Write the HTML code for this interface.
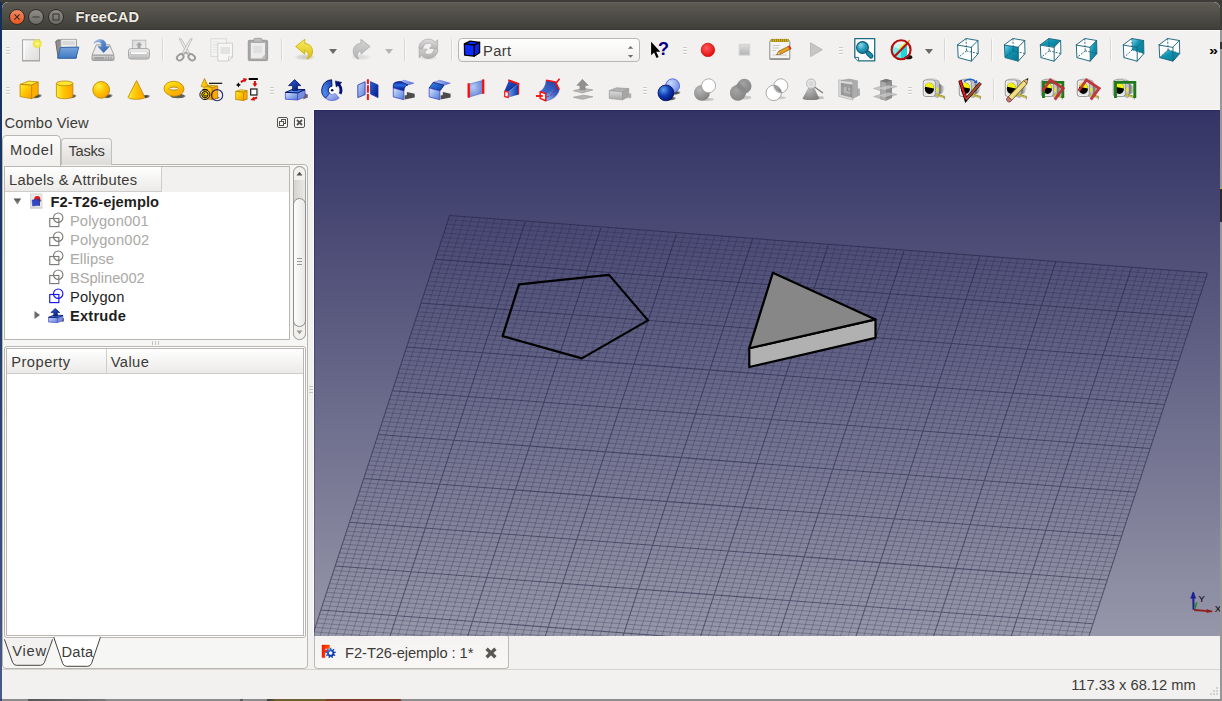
<!DOCTYPE html><html lang="en"><head><meta charset="utf-8"><title>FreeCAD</title><style>
*{box-sizing:border-box;margin:0;padding:0}
html,body{width:1222px;height:701px;overflow:hidden;background:#3b3a36}
body{position:relative;font-family:"Liberation Sans",sans-serif;font-size:14.7px;color:#3c3b37}
.abs{position:absolute}
#desk-l{left:0;top:2px;width:2px;height:699px;background:linear-gradient(#14305a,#1b3a68 40%,#4a5a86 100%)}
#desk-t{left:0;top:0;width:1222px;height:2px;background:#3d3c38}
#desk-r{left:1220px;top:0;width:2px;height:701px;background:linear-gradient(#3d3c38 0,#3d3c38 30px,#979797 30px,#979797 42px,#333 42px,#333 49px,#979797 49px,#979797 188px,#c8bc00 188px,#c8bc00 189px,#2b2b2b 189px,#2b2b2b 222px,#979797 222px,#979797 100%)}
#desk-b{left:0;top:699px;width:1222px;height:2px;background:linear-gradient(90deg,#3a4a78 0,#3a4a78 2px,#8c8c8c 2px,#8c8c8c 28px,#555 28px,#777 105px,#8c8c8c 106px,#8c8c8c 240px,#5a5a5a 240px,#5a5a5a 243px,#8c8c8c 243px,#8c8c8c 267px,#444 267px,#444 270px,#6e6030 276px,#6e6030 325px,#7c3c2a 327px,#7c3c2a 400px,#8e8e8e 402px,#8e8e8e 100%)}
#win{left:2px;top:2px;width:1218px;height:697px;background:#f2f1f0;border-radius:6px 6px 0 0;overflow:hidden}
#title{left:0;top:0;width:1218px;height:28px;background:linear-gradient(#5c5a52,#403f3a 96%,#34332f);border-radius:6px 6px 0 0;border-top:1px solid #64625a}
#title .t{left:73px;top:5px;font-weight:bold;color:#dfdbd2;font-size:14.7px;letter-spacing:.1px}
.wb{position:absolute;top:5.600px;width:16px;height:16px;border-radius:50%;border:1px solid #2e2d2a}
#tl{left:0;top:28px;width:1218px;height:1px;background:#fbfbfa}
.tx{white-space:nowrap;position:absolute}
.ic{position:absolute;width:24px;height:24px}
.ic svg{display:block;width:24px;height:24px;overflow:visible}
.grip{position:absolute;width:4px;height:8px;background:linear-gradient(#cdcbc7 0px,#cdcbc7 1px,#fbfbfa 1px,#fbfbfa 2px,transparent 2px,transparent 3px,#cdcbc7 3px,#cdcbc7 4px,#fbfbfa 4px,#fbfbfa 5px,transparent 5px,transparent 6px,#cdcbc7 6px,#cdcbc7 7px,#fbfbfa 7px,#fbfbfa 8px)}
.sep{position:absolute;width:1px;height:24px;background:linear-gradient(#e6e5e2,#d8d6d3 15%,#d8d6d3 85%,#e6e5e2);box-shadow:1px 0 0 #f9f9f8}
.arr{position:absolute;width:0;height:0;border-left:4px solid transparent;border-right:4px solid transparent;border-top:5px solid #6b6a66}

.hdr{position:absolute;background:linear-gradient(#ffffff,#ebeae8);border-right:1px solid #cfcdc9;border-bottom:1px solid #cfcdc9}
.row{position:absolute;left:0;height:19px;white-space:nowrap}
.g{color:#a5a4a2}
</style></head><body>
<div id="desk-t" class="abs"></div><div id="desk-l" class="abs"></div><div id="desk-r" class="abs"></div><div id="desk-b" class="abs"></div>
<div id="win" class="abs">
<div id="title" class="abs">
<div class="wb" style="left:7.400px;background:linear-gradient(#f28a63,#e8561f)"><svg width="14" height="14" viewBox="0 0 14 14" style="display:block"><path d="M4.4 4.4L9.6 9.6M9.6 4.4L4.4 9.6" stroke="#3a2a22" stroke-width="1.1"/></svg></div>
<div class="wb" style="left:26.400px;background:linear-gradient(#8e8c85,#6d6b65)"><svg width="14" height="14" viewBox="0 0 14 14" style="display:block"><path d="M3.5 7H10.5" stroke="#3a3935" stroke-width="1.1"/></svg></div>
<div class="wb" style="left:45.500px;background:linear-gradient(#8e8c85,#6d6b65)"><svg width="14" height="14" viewBox="0 0 14 14" style="display:block"><rect x="4" y="4" width="6" height="6" fill="none" stroke="#3a3935" stroke-width="1.1"/></svg></div>
</div><div id="tl" class="abs"></div>
<div class="grip" style="left:4px;top:45px"></div><div class="grip" style="left:4px;top:85px"></div>
<div class="sep" style="left:160px;top:36px"></div>
<div class="sep" style="left:279px;top:36px"></div>
<div class="arr" style="left:327px;top:47.0px;border-top-color:#6b6a66"></div>
<div class="arr" style="left:383px;top:47.0px;border-top-color:#b5b3af"></div>
<div class="sep" style="left:402px;top:36px"></div>
<div class="sep" style="left:449px;top:36px"></div>
<div class="grip" style="left:681px;top:45px"></div>
<div class="grip" style="left:837px;top:45px"></div>
<div class="arr" style="left:923px;top:47.0px;border-top-color:#6b6a66"></div>
<div class="sep" style="left:942px;top:36px"></div>
<div class="sep" style="left:989px;top:36px"></div>
<div class="sep" style="left:1108px;top:36px"></div>
<div class="grip" style="left:268px;top:85px"></div>
<div class="grip" style="left:641px;top:85px"></div>
<div class="grip" style="left:906px;top:85px"></div>
<div class="sep" style="left:991px;top:76px"></div>
<div class="abs" style="left:456px;top:36px;width:182px;height:24px;border:1px solid #b8b6b1;border-radius:4px;background:linear-gradient(#fff,#f1f0ee)">


</div>



<svg class="abs" style="left:275px;top:115px" width="11" height="11" viewBox="0 0 11 11"><rect x=".5" y=".5" width="10" height="10" rx="1.500" fill="#f7f6f5" stroke="#55534f"/><rect x="4.500" y="2.500" width="4" height="4" fill="none" stroke="#55534f"/><rect x="2.500" y="4.500" width="4" height="4" fill="#f7f6f5" stroke="#55534f"/></svg>
<svg class="abs" style="left:292px;top:115px" width="11" height="11" viewBox="0 0 11 11"><rect x=".5" y=".5" width="10" height="10" rx="1.500" fill="#f7f6f5" stroke="#55534f"/><path d="M3 3L8 8M8 3L3 8" stroke="#55534f" stroke-width="1.800"/></svg>
<!-- tab pane -->
<div class="abs" style="left:0px;top:162px;width:306px;height:505px;border:1px solid #bab7b2;border-radius:0 4px 4px 4px;background:#f6f6f5"></div>
<div class="abs" style="left:59px;top:136px;width:51px;height:27px;border:1px solid #c2c0bb;border-bottom:none;border-radius:4px 4px 0 0;background:linear-gradient(#f5f4f3,#dedcd9)"></div>
<div class="abs" style="left:0px;top:133px;width:59px;height:31px;border:1px solid #b9b7b2;border-bottom:none;border-radius:5px 5px 0 0;background:linear-gradient(#fcfcfb,#f2f1f0 70%)"></div>

<!-- tree -->
<div class="abs" style="left:2px;top:164px;width:286px;height:174px;border:1px solid #b9b7b2;background:#fff"></div>
<div class="abs" style="left:3px;top:165px;width:284px;height:25px;background:#f2f1f0"></div>
<div class="hdr" style="left:3px;top:165px;width:157px;height:25px"></div>

<svg class="abs" style="left:11px;top:195.500px" width="9" height="8" viewBox="0 0 9 8"><defs><linearGradient id="gx" x1="0" y1="0" x2="0" y2="1"><stop offset="0" stop-color="#4f4e4a"/><stop offset="1" stop-color="#9c9a96"/></linearGradient></defs><path d="M.7 .6H8.100L4.400 6.700Z" fill="url(#gx)"/></svg>
<svg class="abs" style="left:27px;top:191px" width="16" height="17" viewBox="0 0 16 17"><rect x="1.500" y=".9" width="11.400" height="13.800" fill="#e9e9e9" stroke="#d0d0d0" stroke-width=".8"/><path d="M1 15.200H13.500" stroke="#c4c4c4" stroke-width=".8"/><path d="M5.200 6.200A3.100 3.100 0 0 1 11.400 6.200V8.500H5.200Z" fill="#e01818"/><path d="M3 7L9.500 6.300L10.100 12.300L3.600 13Z" fill="#3048c8" stroke="#2038b0" stroke-width=".5"/><path d="M9.500 6.300L10.100 12.300L11 11.500L10.500 5.800Z" fill="#1c2c90"/><path d="M10.800 7.800H12.300M9.800 12.500H11" stroke="#222" stroke-width=".7"/></svg>
<div class="abs" style="left:47px;top:210px;width:16px;height:16px"><svg class="abs" width="16" height="16" viewBox="0 0 16 16"><rect x=".75" y="6.500" width="9.100" height="8.100" fill="#fff" stroke="#7c7b79" stroke-width="1.150"/><circle cx="9.200" cy="5.700" r="4.700" fill="none" stroke="#7c7b79" stroke-width="1.150"/></svg></div>
<div class="abs" style="left:47px;top:229px;width:16px;height:16px"><svg class="abs" width="16" height="16" viewBox="0 0 16 16"><rect x=".75" y="6.500" width="9.100" height="8.100" fill="#fff" stroke="#7c7b79" stroke-width="1.150"/><circle cx="9.200" cy="5.700" r="4.700" fill="none" stroke="#7c7b79" stroke-width="1.150"/></svg></div>
<div class="abs" style="left:47px;top:248px;width:16px;height:16px"><svg class="abs" width="16" height="16" viewBox="0 0 16 16"><rect x=".75" y="6.500" width="9.100" height="8.100" fill="#fff" stroke="#7c7b79" stroke-width="1.150"/><circle cx="9.200" cy="5.700" r="4.700" fill="none" stroke="#7c7b79" stroke-width="1.150"/></svg></div>
<div class="abs" style="left:47px;top:267px;width:16px;height:16px"><svg class="abs" width="16" height="16" viewBox="0 0 16 16"><rect x=".75" y="6.500" width="9.100" height="8.100" fill="#fff" stroke="#7c7b79" stroke-width="1.150"/><circle cx="9.200" cy="5.700" r="4.700" fill="none" stroke="#7c7b79" stroke-width="1.150"/></svg></div>
<div class="abs" style="left:47px;top:286px;width:16px;height:16px"><svg class="abs" width="16" height="16" viewBox="0 0 16 16"><rect x=".75" y="6.500" width="9.100" height="8.100" fill="#fff" stroke="#1414f0" stroke-width="1.150"/><circle cx="9.200" cy="5.700" r="4.700" fill="none" stroke="#1414f0" stroke-width="1.150"/></svg></div>
<svg class="abs" style="left:31px;top:308px" width="8" height="10" viewBox="0 0 8 10"><path d="M1.500 1L7 5L1.500 9Z" fill="#6b6a66"/></svg>
<svg class="abs" style="left:46.400px;top:305.500px" width="15.800" height="15.200" viewBox="284.700 79 21.600 21.800" preserveAspectRatio="none"><defs><linearGradient id="tBl" x1="0" y1="0" x2="1" y2="1"><stop offset="0" stop-color="#c0d0f8"/><stop offset="1" stop-color="#6080d8"/></linearGradient><linearGradient id="tBd" x1="0" y1="0" x2="1" y2="1"><stop offset="0" stop-color="#3060d0"/><stop offset="1" stop-color="#001880"/></linearGradient></defs><path d="M305 93.500L307.800 94.500V97.500L303 99.500Z" fill="#444" opacity=".8"/><path d="M285.400 92.400L297.600 92.800V100L285.400 99.200Z" fill="url(#tBl)" stroke="#4848cc" stroke-width=".9" stroke-linejoin="round"/><path d="M297.600 92.800L305 89.600V96.800L297.600 100Z" fill="#7890dc" stroke="#4848cc" stroke-width=".9" stroke-linejoin="round"/><path d="M285.400 92.400L292.800 89.200L305 89.600L297.600 92.800Z" fill="#3a78e0" stroke="#000c58" stroke-width="1" stroke-linejoin="round"/><path d="M294.600 79.600L300.800 85.600H297.400V90.600H292.700V85.600H288.600Z" fill="url(#tBd)" stroke="#000c58" stroke-width=".9" stroke-linejoin="round"/></svg>

<!-- scrollbar -->
<div class="abs" style="left:291px;top:164px;width:13px;height:174px;border:1px solid #a7a5a0;border-radius:6.500px;background:linear-gradient(90deg,#d6d4d0,#e9e8e5)"></div>
<div class="abs" style="left:291px;top:164px;width:13px;height:14px;border-radius:6.500px 6.500px 0 0;background:#f2f1f0;border:1px solid #a7a5a0;border-bottom:none"></div>
<div class="abs" style="left:291px;top:324px;width:13px;height:14px;border-radius:0 0 6.500px 6.500px;background:#f2f1f0;border:1px solid #a7a5a0;border-top:none"></div>
<div class="abs" style="left:291px;top:196px;width:13px;height:129px;border:1px solid #8f8d88;border-radius:6.500px;background:linear-gradient(90deg,#fdfdfd,#e9e8e6)"></div>
<svg class="abs" style="left:294px;top:169px" width="7" height="5" viewBox="0 0 7 5"><path d="M.5 4.500L3.500 .8L6.500 4.500Z" fill="#55534f"/></svg>
<svg class="abs" style="left:294px;top:328px" width="7" height="5" viewBox="0 0 7 5"><path d="M.5 .5L3.500 4.200L6.500 .5Z" fill="#9b9994"/></svg>
<div class="abs" style="left:295px;top:256px;width:5px;height:1px;background:#9a9893;box-shadow:0 3px #9a9893,0 6px #9a9893"></div>
<!-- splitter -->
<div class="abs" style="left:150px;top:339px;width:1px;height:4px;background:#c4c2be;box-shadow:3px 0 #c4c2be,6px 0 #c4c2be"></div>
<!-- property table -->
<div class="abs" style="left:2px;top:344px;width:302px;height:292px;border:1px solid #bab7b2;border-radius:3px;background:#fff"></div>
<div class="abs" style="left:4px;top:346px;width:298px;height:288px;border:1px solid #bab7b2;background:#fff"></div>
<div class="hdr" style="left:5px;top:347px;width:100px;height:25px"></div>
<div class="hdr" style="left:105px;top:347px;width:196px;height:25px;border-right:none"></div>
<!-- bottom tabs -->
<svg class="abs" style="left:-2px;top:634px" width="112" height="34" viewBox="0 636 112 34"><path d="M4.400 639.300L12.600 662.500Q13.800 665.300 16.500 665.300H40.500Q43.200 665.300 44.400 662.500L52.600 639.300" fill="#f2f1f0" stroke="#45443f" stroke-width="1"/><path d="M53.800 637.300L62.700 663.500Q63.900 666.300 66.600 666.300H87.600Q90.300 666.300 91.500 663.500L100.400 637.300Z" fill="#fff" stroke="#45443f" stroke-width="1"/><path d="M54.500 637.300H99.700" stroke="#fff" stroke-width="1.500"/></svg>

<!-- vertical splitter grip -->
<div class="abs" style="left:307px;top:384px;width:4px;height:1px;background:#c4c2be;box-shadow:0 3px #c4c2be,0 6px #c4c2be"></div>

</div>
<div class="abs" style="left:313px;top:109px;width:907px;height:1px;background:#fbfbfa"></div><div class="abs" style="left:313px;top:109px;width:1px;height:527px;background:#fbfbfa"></div>
<svg class="abs" style="left:314px;top:110px" width="906" height="526" viewBox="0 0 906 526">
<defs><linearGradient id="bg" x1="0" y1="0" x2="0" y2="1"><stop offset="0" stop-color="#333365"/><stop offset="1" stop-color="#9797aa"/></linearGradient></defs>
<rect width="906" height="526" fill="url(#bg)"/><path d="M.5 526V.5H906" fill="none" stroke="#0c0c44" stroke-width="1" opacity=".28"/>
<path d="M143.2 106.0L0.2 544.3M134.2 109.8L892.0 167.5M150.8 106.6L7.8 544.9M132.7 114.2L890.5 171.9M158.3 107.1L15.3 545.4M131.3 118.5L889.1 176.2M165.9 107.7L22.9 546.0M129.9 122.9L887.7 180.6M173.5 108.3L30.5 546.6M128.5 127.3L886.2 185.0M181.1 108.9L38.1 547.2M127.0 131.7L884.8 189.4M188.6 109.4L45.6 547.7M125.6 136.1L883.4 193.8M196.2 110.0L53.2 548.3M124.2 140.5L882.0 198.2M203.8 110.6L60.8 548.9M122.7 144.8L880.5 202.5M219.0 111.7L76.0 550.0M119.9 153.6L877.7 211.3M226.5 112.3L83.5 550.6M118.4 158.0L876.2 215.7M234.1 112.9L91.1 551.2M117.0 162.4L874.8 220.1M241.7 113.5L98.7 551.8M115.6 166.8L873.4 224.5M249.3 114.1L106.3 552.4M114.2 171.1L871.9 228.8M256.8 114.6L113.8 552.9M112.7 175.5L870.5 233.2M264.4 115.2L121.4 553.5M111.3 179.9L869.1 237.6M272.0 115.8L129.0 554.1M109.9 184.3L867.7 242.0M279.6 116.4L136.6 554.7M108.4 188.7L866.2 246.4M294.7 117.5L151.7 555.8M105.6 197.4L863.4 255.1M302.3 118.1L159.3 556.4M104.1 201.8L861.9 259.5M309.9 118.7L166.9 557.0M102.7 206.2L860.5 263.9M317.5 119.2L174.5 557.5M101.3 210.6L859.1 268.3M325.1 119.8L182.1 558.1M99.9 215.0L857.6 272.7M332.6 120.4L189.6 558.7M98.4 219.4L856.2 277.1M340.2 121.0L197.2 559.3M97.0 223.7L854.8 281.4M347.8 121.6L204.8 559.9M95.6 228.1L853.4 285.8M355.4 122.1L212.4 560.4M94.1 232.5L851.9 290.2M370.5 123.3L227.5 561.6M91.3 241.3L849.1 299.0M378.1 123.9L235.1 562.2M89.8 245.7L847.6 303.4M385.7 124.4L242.7 562.7M88.4 250.0L846.2 307.7M393.3 125.0L250.3 563.3M87.0 254.4L844.8 312.1M400.8 125.6L257.8 563.9M85.6 258.8L843.3 316.5M408.4 126.2L265.4 564.5M84.1 263.2L841.9 320.9M416.0 126.7L273.0 565.0M82.7 267.6L840.5 325.3M423.6 127.3L280.6 565.6M81.3 272.0L839.1 329.7M431.1 127.9L288.1 566.2M79.8 276.3L837.6 334.0M446.3 129.1L303.3 567.4M77.0 285.1L834.8 342.8M453.9 129.6L310.9 567.9M75.5 289.5L833.3 347.2M461.5 130.2L318.5 568.5M74.1 293.9L831.9 351.6M469.0 130.8L326.0 569.1M72.7 298.3L830.5 356.0M476.6 131.4L333.6 569.7M71.3 302.6L829.0 360.3M484.2 131.9L341.2 570.2M69.8 307.0L827.6 364.7M491.8 132.5L348.8 570.8M68.4 311.4L826.2 369.1M499.3 133.1L356.3 571.4M67.0 315.8L824.8 373.5M506.9 133.7L363.9 572.0M65.5 320.2L823.3 377.9M522.1 134.8L379.1 573.1M62.7 328.9L820.5 386.6M529.7 135.4L386.7 573.7M61.2 333.3L819.0 391.0M537.2 136.0L394.2 574.3M59.8 337.7L817.6 395.4M544.8 136.6L401.8 574.9M58.4 342.1L816.2 399.8M552.4 137.1L409.4 575.4M57.0 346.5L814.8 404.2M560.0 137.7L417.0 576.0M55.5 350.8L813.3 408.5M567.5 138.3L424.5 576.6M54.1 355.2L811.9 412.9M575.1 138.9L432.1 577.2M52.7 359.6L810.5 417.3M582.7 139.4L439.7 577.7M51.2 364.0L809.0 421.7M597.9 140.6L454.9 578.9M48.4 372.8L806.2 430.5M605.4 141.2L462.4 579.5M46.9 377.1L804.7 434.8M613.0 141.8L470.0 580.1M45.5 381.5L803.3 439.2M620.6 142.3L477.6 580.6M44.1 385.9L801.9 443.6M628.2 142.9L485.2 581.2M42.7 390.3L800.4 448.0M635.7 143.5L492.7 581.8M41.2 394.7L799.0 452.4M643.3 144.1L500.3 582.4M39.8 399.1L797.6 456.8M650.9 144.6L507.9 582.9M38.4 403.4L796.2 461.1M658.5 145.2L515.5 583.5M36.9 407.8L794.7 465.5M673.6 146.4L530.6 584.7M34.1 416.6L791.9 474.3M681.2 146.9L538.2 585.2M32.6 421.0L790.4 478.7M688.8 147.5L545.8 585.8M31.2 425.4L789.0 483.1M696.4 148.1L553.4 586.4M29.8 429.7L787.6 487.4M704.0 148.7L561.0 587.0M28.4 434.1L786.1 491.8M711.5 149.3L568.5 587.6M26.9 438.5L784.7 496.2M719.1 149.8L576.1 588.1M25.5 442.9L783.3 500.6M726.7 150.4L583.7 588.7M24.1 447.3L781.9 505.0M734.3 151.0L591.3 589.3M22.6 451.7L780.4 509.4M749.4 152.1L606.4 590.4M19.8 460.4L777.6 518.1M757.0 152.7L614.0 591.0M18.3 464.8L776.1 522.5M764.6 153.3L621.6 591.6M16.9 469.2L774.7 526.9M772.2 153.9L629.2 592.2M15.5 473.6L773.3 531.3M779.7 154.4L636.7 592.7M14.1 478.0L771.8 535.7M787.3 155.0L644.3 593.3M12.6 482.3L770.4 540.0M794.9 155.6L651.9 593.9M11.2 486.7L769.0 544.4M802.5 156.2L659.5 594.5M9.8 491.1L767.6 548.8M810.0 156.8L667.0 595.1M8.3 495.5L766.1 553.2M825.2 157.9L682.2 596.2M5.5 504.3L763.3 562.0M832.8 158.5L689.8 596.8M4.0 508.6L761.8 566.3M840.4 159.1L697.4 597.4M2.6 513.0L760.4 570.7M847.9 159.6L704.9 597.9M1.2 517.4L759.0 575.1M855.5 160.2L712.5 598.5M-0.2 521.8L757.5 579.5M863.1 160.8L720.1 599.1M-1.7 526.2L756.1 583.9M870.7 161.4L727.7 599.7M-3.1 530.6L754.7 588.3M878.2 161.9L735.2 600.2M-4.5 534.9L753.3 592.6M885.8 162.5L742.8 600.8M-6.0 539.3L751.8 597.0" stroke="#1a1a3e" stroke-opacity=".30" stroke-width=".85" fill="none"/>
<path d="M135.6 105.4L-7.4 543.7M135.6 105.4L893.4 163.1M211.4 111.2L68.4 549.5M121.3 149.2L879.1 206.9M287.2 116.9L144.2 555.2M107.0 193.1L864.8 250.8M362.9 122.7L219.9 561.0M92.7 236.9L850.5 294.6M438.7 128.5L295.7 566.8M78.4 280.7L836.2 338.4M514.5 134.2L371.5 572.5M64.1 324.5L821.9 382.2M590.3 140.0L447.3 578.3M49.8 368.4L807.6 426.1M666.1 145.8L523.1 584.1M35.5 412.2L793.3 469.9M741.8 151.6L598.8 589.9M21.2 456.0L779.0 513.7M817.6 157.3L674.6 595.6M6.9 499.9L764.7 557.6M893.4 163.1L750.4 601.4M-7.4 543.7L750.4 601.4" stroke="#1a1a3e" stroke-opacity=".52" stroke-width="1.05" fill="none"/>
<polygon points="205.0,174.3 295.0,164.9 334.0,210.4 267.8,248.4 188.6,226.1" fill="none" stroke="#000" stroke-width="2.2" stroke-linejoin="round"/>
<polygon points="435.3,238.2 561.5,209.4 561.5,227.9 435.3,257.0" fill="#b1b1b1" stroke="#000" stroke-width="2.2" stroke-linejoin="round"/>
<polygon points="458.8,162.8 561.5,209.4 435.3,238.2" fill="#878787" stroke="#000" stroke-width="2.2" stroke-linejoin="round"/>
<g transform="translate(880.1,499.7)"><path d="M-.5 0L-.9 -17" stroke="#1e1e96" stroke-width="2"/><path d="M-3.400 -11.500L-.9 -17.800L1.600 -11.500Z" fill="#1e1e96" stroke="#1e1e96" stroke-width=".6"/><path d="M.8 -1L2.600 -7.500" stroke="#2a8a2a" stroke-width="1.800"/><path d="M0 .3L18 1.600" stroke="#8f2020" stroke-width="1.800"/><path d="M12.500 -.8L18.800 1.700L12.300 3.200Z" fill="#8f2020"/>
<text x="4.400" y="-7.900" font-size="9.500" fill="#000" font-family="Liberation Sans, sans-serif">Y</text><text x="20.600" y="2.200" font-size="9.500" fill="#000" font-family="Liberation Sans, sans-serif">X</text></g>
</svg>

<div class="abs" style="left:314px;top:636px;width:195px;height:33px;border:1px solid #bcbab5;border-top:none;border-radius:0 0 4px 4px;background:linear-gradient(#f4f3f2,#f8f7f6)"></div>
<svg class="abs" style="left:318px;top:642px" width="22" height="20" viewBox="318 642 22 20"><defs><linearGradient id="gF" x1="0" y1="0" x2="1" y2="0"><stop offset="0" stop-color="#ff1a00"/><stop offset="1" stop-color="#ff5a00"/></linearGradient><radialGradient id="gGear" cx=".35" cy=".3" r=".8"><stop offset="0" stop-color="#3a78e0"/><stop offset=".6" stop-color="#1040b0"/><stop offset="1" stop-color="#04208a"/></radialGradient></defs><path d="M322 645.100H329.400V648.600H324.900V650H328.300V652.200H324.900V657.600H322Z" fill="url(#gF)" stroke="#d01800" stroke-width=".4"/><path d="M330.01 649.37L330.16 647.83L331.24 647.83L331.39 649.37L332.51 649.77L333.61 648.69L334.44 649.39L333.57 650.66L334.16 651.69L335.70 651.57L335.89 652.64L334.40 653.05L334.19 654.22L335.45 655.12L334.91 656.06L333.50 655.42L332.59 656.18L332.98 657.67L331.96 658.05L331.29 656.65L330.11 656.65L329.44 658.05L328.42 657.67L328.81 656.18L327.90 655.42L326.49 656.06L325.95 655.12L327.21 654.22L327.00 653.05L325.51 652.64L325.70 651.57L327.24 651.69L327.83 650.66L326.96 649.39L327.79 648.69L328.89 649.77ZM329.10 653.00A1.6 1.6 0 1 0 332.30 653.00A1.6 1.6 0 1 0 329.10 653.00Z" fill="url(#gGear)" fill-rule="evenodd"/><circle cx="330.7" cy="653.0" r="1.6" fill="#fff"/></svg>

<svg class="abs" style="left:484px;top:646px" width="14" height="14" viewBox="0 0 14 14"><path d="M2.600 2.800L11.400 11.200M11.400 2.800L2.600 11.200" stroke="#5a5854" stroke-width="3.300"/></svg>
<div class="abs" style="left:2px;top:669px;width:1218px;height:1px;background:#d6d4d0"></div>

<svg class="abs" style="left:1207px;top:686px" width="12" height="12" viewBox="0 0 12 12"><g fill="#d4d2ce"><rect x="9" y="1" width="2" height="2"/><rect x="6" y="4" width="2" height="2"/><rect x="9" y="4" width="2" height="2"/><rect x="3" y="7" width="2" height="2"/><rect x="6" y="7" width="2" height="2"/><rect x="9" y="7" width="2" height="2"/></g></svg>

<svg class="abs" style="left:0;top:30px" width="1222" height="80" viewBox="0 30 1222 80"><defs>
<linearGradient id="gPaper" x1="0" y1="0" x2="1" y2="1"><stop offset="0" stop-color="#fafafa"/><stop offset="1" stop-color="#dcdcdc"/></linearGradient>
<radialGradient id="gGlow"><stop offset="0" stop-color="#fffde0"/><stop offset=".35" stop-color="#f6ee50"/><stop offset=".75" stop-color="#eee23a" stop-opacity=".85"/><stop offset="1" stop-color="#eee23a" stop-opacity="0"/></radialGradient>
<linearGradient id="gFolder" x1="0" y1="0" x2="0" y2="1"><stop offset="0" stop-color="#7aa7de"/><stop offset="1" stop-color="#3f79c4"/></linearGradient>
<linearGradient id="gPap2" x1="0" y1="0" x2="1" y2="1"><stop offset="0" stop-color="#d6d6d6"/><stop offset="1" stop-color="#f4f4f4"/></linearGradient>
<linearGradient id="gSaveA" x1="0" y1="0" x2="1" y2="1"><stop offset="0" stop-color="#6a9ad8" stop-opacity=".15"/><stop offset=".35" stop-color="#5d8fd0"/><stop offset="1" stop-color="#2a5ea8"/></linearGradient>
<linearGradient id="gGray" x1="0" y1="0" x2="0" y2="1"><stop offset="0" stop-color="#f0f0f0"/><stop offset="1" stop-color="#bdbdbd"/></linearGradient>
<linearGradient id="gGray2" x1="0" y1="0" x2="0" y2="1"><stop offset="0" stop-color="#dcdcdc"/><stop offset="1" stop-color="#a8a8a8"/></linearGradient>
<linearGradient id="gArrowB" x1="0" y1="0" x2="0" y2="1"><stop offset="0" stop-color="#5d8fd0"/><stop offset="1" stop-color="#2a5ea8"/></linearGradient>
<linearGradient id="gUndo" x1="0" y1="0" x2="0" y2="1"><stop offset="0" stop-color="#f8ec60"/><stop offset="1" stop-color="#d9bf12"/></linearGradient>
<linearGradient id="gRedo" x1="0" y1="0" x2="0" y2="1"><stop offset="0" stop-color="#d4d4d4"/><stop offset="1" stop-color="#b4b4b4"/></linearGradient>
<radialGradient id="gRec" cx=".4" cy=".35" r=".7"><stop offset="0" stop-color="#ff5a5a"/><stop offset="1" stop-color="#e00808"/></radialGradient>
<radialGradient id="gLens" cx=".35" cy=".3" r=".8"><stop offset="0" stop-color="#8fd8ec"/><stop offset=".5" stop-color="#2a9cbc"/><stop offset="1" stop-color="#0f6f8c"/></radialGradient>
<linearGradient id="gTeal" x1="0" y1="0" x2="1" y2="1"><stop offset="0" stop-color="#7fd8f4"/><stop offset=".4" stop-color="#1294b2"/><stop offset="1" stop-color="#007890"/></linearGradient>
<linearGradient id="gY" x1="0" y1="0" x2="1" y2="1"><stop offset="0" stop-color="#ffee30"/><stop offset=".5" stop-color="#ffc400"/><stop offset="1" stop-color="#ff9c00"/></linearGradient>
<linearGradient id="gYh" x1="0" y1="0" x2="1" y2="0"><stop offset="0" stop-color="#ffec30"/><stop offset=".55" stop-color="#ffbe00"/><stop offset="1" stop-color="#ffa200"/></linearGradient>
<radialGradient id="gYr" cx=".35" cy=".3" r=".8"><stop offset="0" stop-color="#fff040"/><stop offset=".5" stop-color="#ffc200"/><stop offset="1" stop-color="#f59800"/></radialGradient>
<radialGradient id="gSh"><stop offset="0" stop-color="#000" stop-opacity=".8"/><stop offset=".6" stop-color="#000" stop-opacity=".55"/><stop offset="1" stop-color="#000" stop-opacity="0"/></radialGradient>
<linearGradient id="gBl" x1="0" y1="0" x2="1" y2="1"><stop offset="0" stop-color="#c0d0f8"/><stop offset="1" stop-color="#6080d8"/></linearGradient>
<linearGradient id="gBd" x1="0" y1="0" x2="1" y2="1"><stop offset="0" stop-color="#3060d0"/><stop offset="1" stop-color="#001880"/></linearGradient>
<radialGradient id="gBs" cx=".35" cy=".3" r=".8"><stop offset="0" stop-color="#5aa0f0"/><stop offset=".5" stop-color="#1038b0"/><stop offset="1" stop-color="#001070"/></radialGradient>
<radialGradient id="gBsl" cx=".35" cy=".3" r=".8"><stop offset="0" stop-color="#c8d8fc"/><stop offset="1" stop-color="#6888e0"/></radialGradient>
<linearGradient id="gRev" x1="0" y1="1" x2="1" y2="0"><stop offset="0" stop-color="#5a9cf0"/><stop offset=".5" stop-color="#3a74dc"/><stop offset="1" stop-color="#1038a8"/></linearGradient>
<linearGradient id="gSw1" x1="0" y1="1" x2="1" y2="0"><stop offset="0" stop-color="#4a78d8"/><stop offset="1" stop-color="#2040a0"/></linearGradient><linearGradient id="gSw2" x1="0" y1="1" x2="1" y2="0"><stop offset="0" stop-color="#90c0f8"/><stop offset=".5" stop-color="#3c68c8"/><stop offset="1" stop-color="#0c2898"/></linearGradient>
<linearGradient id="gTapeSh" x1="0" y1="0" x2="1" y2="0"><stop offset="0" stop-color="#3c3c3c" stop-opacity=".9"/><stop offset="1" stop-color="#8a8a8a" stop-opacity="0"/></linearGradient>
<radialGradient id="gSoft"><stop offset="0" stop-color="#000" stop-opacity=".17"/><stop offset=".6" stop-color="#000" stop-opacity=".1"/><stop offset="1" stop-color="#000" stop-opacity="0"/></radialGradient>
<linearGradient id="gRefr" x1="0" y1="0" x2="0" y2="1"><stop offset="0" stop-color="#dedede"/><stop offset="1" stop-color="#b9b9b9"/></linearGradient><linearGradient id="gRefr2" x1="0" y1="1" x2="0" y2="0"><stop offset="0" stop-color="#cfcfcf"/><stop offset="1" stop-color="#adadad"/></linearGradient>
<radialGradient id="gSh2"><stop offset="0" stop-color="#333" stop-opacity=".85"/><stop offset=".75" stop-color="#444" stop-opacity=".8"/><stop offset="1" stop-color="#555" stop-opacity="0"/></radialGradient><linearGradient id="gTor" x1=".1" y1="0" x2=".8" y2="1"><stop offset="0" stop-color="#fff22a"/><stop offset=".45" stop-color="#ffc400"/><stop offset="1" stop-color="#ffa000"/></linearGradient>
<linearGradient id="gFilF" x1="0" y1="0" x2="1" y2="1"><stop offset="0" stop-color="#dce8fc"/><stop offset=".5" stop-color="#90b0ec"/><stop offset="1" stop-color="#5078d4"/></linearGradient><linearGradient id="gFilTop" x1="0" y1="0" x2="1" y2="0"><stop offset="0" stop-color="#b8ccf6"/><stop offset="1" stop-color="#5070d8"/></linearGradient><linearGradient id="gFil" x1="0" y1="0" x2="0" y2="1"><stop offset="0" stop-color="#0c2ca0"/><stop offset=".4" stop-color="#2a6ce0"/><stop offset=".7" stop-color="#0c34a8"/><stop offset="1" stop-color="#001478"/></linearGradient><linearGradient id="gCha" x1="0" y1="0" x2="1" y2="1"><stop offset="0" stop-color="#3a88ec"/><stop offset="1" stop-color="#0c38a8"/></linearGradient>
<radialGradient id="gExT" cx=".4" cy=".6" r=".7"><stop offset="0" stop-color="#5aa0f8"/><stop offset="1" stop-color="#1c50c8"/></radialGradient>
<radialGradient id="gRul" cx=".3" cy=".4" r=".8"><stop offset="0" stop-color="#b4ccf4"/><stop offset="1" stop-color="#5a78d0"/></radialGradient><linearGradient id="gLoF" x1="0" y1="0" x2="1" y2="0"><stop offset="0" stop-color="#5a9cf0"/><stop offset="1" stop-color="#1030a0"/></linearGradient>
<radialGradient id="gGs2" cx=".4" cy=".35" r=".8"><stop offset="0" stop-color="#a4a4a4"/><stop offset="1" stop-color="#7e7e7e"/></radialGradient>
<radialGradient id="gGs" cx=".35" cy=".3" r=".8"><stop offset="0" stop-color="#b8b8b8"/><stop offset="1" stop-color="#7c7c7c"/></radialGradient>
</defs><g><path d="M22 61.200H40" stroke="#b9b8b5" stroke-width="1"/><rect x="22.500" y="39.800" width="17" height="20.700" fill="url(#gPaper)" stroke="#a9a9a9" stroke-width="1"/><path d="M24.500 41V59.500" stroke="#fff" stroke-width="1" opacity=".7"/><circle cx="37.300" cy="43.700" r="5.200" fill="url(#gGlow)"/></g>
<g><path d="M55.700 41.500L57.500 40H61L62 41.500H76.500V58H58.200Z" fill="#8e8e8e" stroke="#686868" stroke-width="1" stroke-linejoin="round"/><rect x="60.800" y="39.300" width="15.700" height="8" fill="#ededed" stroke="#9c9c9c" stroke-width=".8"/><path d="M62.500 42H75M62.500 44H75" stroke="#c4c4c4" stroke-width="1"/><path d="M60.600 47.500L78.800 47.100L75.900 58.200H57.600Z" fill="url(#gFolder)" stroke="#3567a8" stroke-width="1" stroke-linejoin="round"/></g>
<g><path d="M96.300 44.800H109.700L114 55.200H92Z" fill="#ececec" stroke="#a2a2a2" stroke-width="1" stroke-linejoin="round"/><rect x="92" y="55.200" width="22" height="5.200" rx="1.200" fill="url(#gGray2)" stroke="#9a9a9a" stroke-width="1"/><path d="M94.500 58H104" stroke="#8a8a8a" stroke-width="1.200"/><path d="M106 56.500V59.500M108.500 56.500V59.500M111 56.500V59.500" stroke="#9c9c9c" stroke-width="1"/><path d="M93.800 43.500C95.500 39 103.500 37.500 105.800 43V46.400H109.600L103.600 52.800L97.800 46.400H101.500V44C100.500 41.500 96.500 41.500 93.800 43.500Z" fill="url(#gSaveA)" stroke="#2c5da5" stroke-opacity=".45" stroke-width=".6" stroke-linejoin="round"/></g>
<g><rect x="132.400" y="40.200" width="13.400" height="9.500" fill="url(#gPap2)" stroke="#bdbdbd" stroke-width="1"/><path d="M139.100 42L142.300 45.300H140.600V48.500H137.600V45.300H135.900Z" fill="#a4a4a4"/><rect x="128.500" y="48.600" width="21" height="10.500" rx="2.600" fill="url(#gGray)" stroke="#a6a6a6" stroke-width="1"/><path d="M130.600 52.300V53.600Q130.600 54.800 131.800 54.800H146.200Q147.400 54.800 147.400 53.600V52.300" fill="#fbfbfb" stroke="#b2b2b2" stroke-width=".9"/><path d="M130 57.300H148" stroke="#bdbdbd" stroke-width="1.200"/></g>
<g><path d="M179.300 38.700L181.200 38.900L189.800 53.500L187.500 54.800Z" fill="#f0f0f0" stroke="#b2b2b2" stroke-width=".8" stroke-linejoin="round"/><path d="M192.200 38.700L190.300 38.900L182 53.500L184.200 54.800Z" fill="#f0f0f0" stroke="#b2b2b2" stroke-width=".8" stroke-linejoin="round"/><ellipse cx="180.200" cy="57.300" rx="3.600" ry="2.700" transform="rotate(-38 180.200 57.300)" fill="none" stroke="#9c9c9c" stroke-width="1.900"/><ellipse cx="191.700" cy="57.300" rx="3.600" ry="2.700" transform="rotate(38 191.700 57.300)" fill="none" stroke="#9c9c9c" stroke-width="1.900"/><path d="M183.500 53L188.300 53" stroke="#a5a5a5" stroke-width="1.500"/></g>
<g><rect x="211" y="38.800" width="15.400" height="17.600" fill="#f4f4f3" stroke="#d9d9d8" stroke-width="1"/><path d="M213 42H218M213 44.500H218M213 47H217M213 49.500H217M213 52H217" stroke="#e3e3e2" stroke-width="1"/><path d="M217.800 43.200H232.500V57L228.500 61H217.800Z" fill="#f6f6f5" stroke="#cfcfce" stroke-width="1"/><rect x="220.500" y="47" width="9.500" height="7" fill="#e3e3e2"/><path d="M232.500 57L228.500 57V61Z" fill="#fbfbfb" stroke="#c6c6c5" stroke-width=".8"/></g>
<g><rect x="248.300" y="40.300" width="19.300" height="20.300" rx="1" fill="#a6a6a6" stroke="#9a9a9a" stroke-width="1"/><rect x="250.800" y="42.800" width="14.300" height="15.700" fill="#ececec"/><rect x="253.500" y="46" width="8.500" height="7" fill="#dfdfdf"/><path d="M265.100 54.500L261 58.500H265.100Z" fill="#bdbdbd"/><rect x="254" y="38.300" width="8" height="4" rx="1" fill="#bcbcbc" stroke="#a0a0a0" stroke-width=".8"/></g>
<g><ellipse cx="304.800" cy="57.200" rx="11" ry="3.200" fill="url(#gSoft)"/><path d="M295.700 46.500L304.800 39.300V43.500C310.300 43.700 313.100 47.900 312.400 52.800C312 56.300 309.700 58.300 306.900 59C309 56.300 309.400 52.800 304.800 50.400V54.200Z" fill="url(#gUndo)" stroke="#cdb10e" stroke-width=".9" stroke-linejoin="round"/></g>
<g><ellipse cx="361" cy="57.200" rx="11" ry="3.200" fill="url(#gSoft)" opacity=".6"/><path d="M295.700 46.500L304.800 39.300V43.500C310.300 43.700 313.100 47.900 312.400 52.800C312 56.300 309.700 58.300 306.900 59C309 56.300 309.400 52.800 304.800 50.400V54.200Z" transform="translate(665.750,0) scale(-1,1)" fill="url(#gRedo)" stroke="#b0b0b0" stroke-width=".9" stroke-linejoin="round"/></g>
<g stroke="#a6a6a6" stroke-width=".7" stroke-linejoin="round"><ellipse cx="428.400" cy="58" rx="9" ry="1.800" fill="#000" opacity=".05" stroke="none"/><path d="M418.800 48.400A9.600 9.600 0 0 1 435.200 42L437.600 39.800V48.400H429.600L432.400 44.800A5.600 5.600 0 0 0 422.800 48.400Z" fill="url(#gRefr)"/><path d="M418.800 48.400A9.600 9.600 0 0 1 435.200 42L437.600 39.800V48.400H429.600L432.400 44.800A5.600 5.600 0 0 0 422.800 48.400Z" transform="rotate(180 428.400 48.800)" fill="url(#gRefr2)"/></g>
<g><path d="M651.100 41.700V55.200L654.100 52.500L656.500 57.900L658.600 57L656.200 51.700H660.300Z" fill="#000"/><text x="658" y="55.200" font-family="Liberation Sans, sans-serif" font-weight="bold" font-size="18" fill="#000080">?</text></g>
<circle cx="707.900" cy="49.900" r="6.700" fill="url(#gRec)" stroke="#d40a0a" stroke-width=".8"/>
<rect x="739.200" y="44.300" width="10.500" height="10.800" fill="url(#gGray2)" stroke="#cdcdcd" stroke-width="1" opacity=".85"/>
<g><rect x="769.800" y="40.500" width="20" height="19" rx="1" fill="#f4f4f2" stroke="#8e8e8e" stroke-width="1"/><path d="M769.500 58.800H790" stroke="#9b9b9b" stroke-width="1.600"/><rect x="771" y="39.200" width="17.600" height="2.400" fill="#d8b824" stroke="#a88c10" stroke-width=".6"/><path d="M772.500 39V41.800M774.500 39V41.800M776.500 39V41.800M778.500 39V41.800M780.500 39V41.800M782.500 39V41.800M784.500 39V41.800M786.500 39V41.800" stroke="#8a6f08" stroke-width=".7"/><path d="M772.500 45.500H780M772.500 48H779M772.500 50.500H776M772.500 55H787" stroke="#c9c9c7" stroke-width="1"/><path d="M776.700 54.600L779 51L789.500 45.800L791.200 48.800L780.600 54.200Z" fill="#e8a020" stroke="#8a5a10" stroke-width=".7" stroke-linejoin="round"/><path d="M776.700 54.600L779 51L780.600 54.200Z" fill="#f0d8a8" stroke="#8a5a10" stroke-width=".5"/><path d="M788 46.500L789.500 45.800L791.200 48.800L789.700 49.600Z" fill="#d03030"/></g>
<path d="M810.500 42.800L822.300 49.700L810.500 56.600Z" fill="#c6c6c6" stroke="#b5b5b5" stroke-width=".9" stroke-linejoin="round"/>
<g><path d="M854.800 38.600H874.700V60.900H858.600L854.800 57.400Z" fill="#fff" stroke="#1f6d84" stroke-width="1.300" stroke-linejoin="round"/><path d="M854.800 57.400H858.600V60.900" fill="#fff" stroke="#1f6d84" stroke-width="1" stroke-linejoin="round"/><path d="M868.200 53.200L871 56" stroke="#0e5c74" stroke-width="5" stroke-linecap="round"/><path d="M868.200 53.200L871 56" stroke="#1592b2" stroke-width="2.900" stroke-linecap="round"/><circle cx="862.500" cy="47.500" r="5.900" fill="url(#gLens)" stroke="#0e5c74" stroke-width="1.200"/></g>
<g><ellipse cx="908.300" cy="57.200" rx="4" ry="2.100" fill="#111"/><path d="M892 46.500L898.500 43.700L907 45.800L901 49Z" fill="#c4f6f6"/><path d="M892 46.500L901 49V58.700L892.500 55.800Z" fill="#7aeaea"/><path d="M901 49L907 45.800V56L901 58.700Z" fill="#22d4d8"/><path d="M892.500 50.500L896 51.500V57" fill="none" stroke="#a8f2f2" stroke-width=".6"/><path d="M899.500 48.800L906.500 42.300" stroke="#f4e020" stroke-width="1.700"/><path d="M908.300 41.800L909.800 40.200" stroke="#e89820" stroke-width="1.300"/><circle cx="901.100" cy="49.800" r="9.500" fill="none" stroke="#b30f0f" stroke-width="2.100"/><path d="M894.400 56.500L907.800 43.100" stroke="#b30f0f" stroke-width="2.100"/></g>
<g stroke-linejoin="round" stroke-linecap="round"><polygon points="957.60,44.80 966.10,38.50 977.90,40.50 978.20,53.60 971.50,61.20 958.20,57.60" fill="#fff"/><path d="M966.10 38.50L966.45 50.85M966.45 50.85L958.20 57.60M966.45 50.85L978.20 53.60" stroke="#165c72" stroke-width=".9" stroke-dasharray="2 1.300" stroke-linecap="butt" fill="none"/><path d="M957.60 44.80L966.10 38.50L977.90 40.50L971.50 47.10ZM957.60 44.80L958.20 57.60L971.50 61.20L971.50 47.10M977.90 40.50L978.20 53.60L971.50 61.20" fill="none" stroke="#1d667c" stroke-width=".95"/></g>
<g stroke-linejoin="round" stroke-linecap="round"><polygon points="1004.40,44.80 1012.90,38.50 1024.70,40.50 1025.00,53.60 1018.30,61.20 1005.00,57.60" fill="#fff"/><polygon points="1004.40,44.80 1018.30,47.10 1018.30,61.20 1005.00,57.60" fill="url(#gTeal)"/><path d="M1012.90 38.50L1013.25 50.85M1013.25 50.85L1005.00 57.60M1013.25 50.85L1025.00 53.60" stroke="#165c72" stroke-width=".9" stroke-dasharray="2 1.300" stroke-linecap="butt" fill="none"/><path d="M1004.40 44.80L1012.90 38.50L1024.70 40.50L1018.30 47.10ZM1004.40 44.80L1005.00 57.60L1018.30 61.20L1018.30 47.10M1024.70 40.50L1025.00 53.60L1018.30 61.20" fill="none" stroke="#1d667c" stroke-width=".95"/></g>
<g stroke-linejoin="round" stroke-linecap="round"><polygon points="1040.30,44.80 1048.80,38.50 1060.60,40.50 1060.90,53.60 1054.20,61.20 1040.90,57.60" fill="#fff"/><polygon points="1040.30,44.80 1048.80,38.50 1060.60,40.50 1054.20,47.10" fill="url(#gTeal)"/><path d="M1048.80 38.50L1049.15 50.85M1049.15 50.85L1040.90 57.60M1049.15 50.85L1060.90 53.60" stroke="#165c72" stroke-width=".9" stroke-dasharray="2 1.300" stroke-linecap="butt" fill="none"/><path d="M1040.30 44.80L1048.80 38.50L1060.60 40.50L1054.20 47.10ZM1040.30 44.80L1040.90 57.60L1054.20 61.20L1054.20 47.10M1060.60 40.50L1060.90 53.60L1054.20 61.20" fill="none" stroke="#1d667c" stroke-width=".95"/></g>
<g stroke-linejoin="round" stroke-linecap="round"><polygon points="1076.30,44.80 1084.80,38.50 1096.60,40.50 1096.90,53.60 1090.20,61.20 1076.90,57.60" fill="#fff"/><polygon points="1090.20,47.10 1096.60,40.50 1096.90,53.60 1090.20,61.20" fill="url(#gTeal)"/><path d="M1084.80 38.50L1085.15 50.85M1085.15 50.85L1076.90 57.60M1085.15 50.85L1096.90 53.60" stroke="#165c72" stroke-width=".9" stroke-dasharray="2 1.300" stroke-linecap="butt" fill="none"/><path d="M1076.30 44.80L1084.80 38.50L1096.60 40.50L1090.20 47.10ZM1076.30 44.80L1076.90 57.60L1090.20 61.20L1090.20 47.10M1096.60 40.50L1096.90 53.60L1090.20 61.20" fill="none" stroke="#1d667c" stroke-width=".95"/></g>
<g stroke-linejoin="round" stroke-linecap="round"><polygon points="1123.30,44.80 1131.80,38.50 1143.60,40.50 1143.90,53.60 1137.20,61.20 1123.90,57.60" fill="#fff"/><polygon points="1131.80,38.50 1143.60,40.50 1143.90,53.60 1132.30,49.75" fill="url(#gTeal)"/><path d="M1131.80 38.50L1132.30 49.75M1132.30 49.75L1123.90 57.60M1132.30 49.75L1143.90 53.60" stroke="#165c72" stroke-width=".9" stroke-dasharray="2 1.300" stroke-linecap="butt" fill="none"/><path d="M1123.30 44.80L1131.80 38.50L1143.60 40.50L1137.20 47.10ZM1123.30 44.80L1123.90 57.60L1137.20 61.20L1137.20 47.10M1143.60 40.50L1143.90 53.60L1137.20 61.20" fill="none" stroke="#1d667c" stroke-width=".95"/></g>
<g stroke-linejoin="round" stroke-linecap="round"><polygon points="1159.10,44.80 1167.60,38.50 1179.40,40.50 1179.70,53.60 1173.00,61.20 1159.70,57.60" fill="#fff"/><polygon points="1159.70,57.60 1173.00,61.20 1179.70,53.60 1168.10,49.75" fill="url(#gTeal)"/><path d="M1167.60 38.50L1168.10 49.75M1168.10 49.75L1159.70 57.60M1168.10 49.75L1179.70 53.60" stroke="#165c72" stroke-width=".9" stroke-dasharray="2 1.300" stroke-linecap="butt" fill="none"/><path d="M1159.10 44.80L1167.60 38.50L1179.40 40.50L1173.00 47.10ZM1159.10 44.80L1159.70 57.60L1173.00 61.20L1173.00 47.10M1179.40 40.50L1179.70 53.60L1173.00 61.20" fill="none" stroke="#1d667c" stroke-width=".95"/></g>
<g stroke="#000" stroke-width="1.300" stroke-linejoin="round"><path d="M464.400 43.900L470.100 41.200L479.600 42.300L474.100 45.200Z" fill="#0a2cff"/><path d="M474.100 45.200L479.600 42.300V52.800L474.100 56.200Z" fill="#0822e6"/><path d="M464.400 43.900L474.100 45.200V56.200L464.600 55.100Z" fill="#0a2cff"/></g>
<path d="M627.900 48.700L630.550 46L633.200 48.700ZM627.900 55L630.550 57.700L633.200 55Z" fill="#6f6d69"/>
<g><ellipse cx="37" cy="96.3" rx="5.5" ry="2.3" transform="rotate(-12 37 96.3)" fill="url(#gSh)"/><path d="M20.100 84.400L28.700 81.100L38.200 82L31.700 85.200Z" fill="#ffe93a" stroke="#b98600" stroke-width=".8" stroke-linejoin="round"/><path d="M20.100 84.400L31.700 85.200V98.700L20.100 96.600Z" fill="url(#gY)" stroke="#b98600" stroke-width=".8" stroke-linejoin="round"/><path d="M31.700 85.200L38.200 82V94.600L31.700 98.700Z" fill="#ffae00" stroke="#b98600" stroke-width=".8" stroke-linejoin="round"/></g>
<g><ellipse cx="72" cy="96.4" rx="5" ry="2.2" transform="rotate(-10 72 96.4)" fill="url(#gSh)"/><path d="M56.400 83.400V96.300A8.250 2.400 0 0 0 72.900 96.300V83.400Z" fill="url(#gYh)" stroke="#b98600" stroke-width=".8" stroke-linejoin="round"/><ellipse cx="64.650" cy="83.400" rx="8.250" ry="2.400" fill="#ffe635" stroke="#b98600" stroke-width=".8" stroke-linejoin="round"/></g>
<g><ellipse cx="108" cy="96.2" rx="5.2" ry="2.3" transform="rotate(-10 108 96.2)" fill="url(#gSh)"/><circle cx="101.200" cy="89.900" r="8.400" fill="url(#gYr)" stroke="#b98600" stroke-width=".8" stroke-linejoin="round"/></g>
<g><ellipse cx="145.5" cy="96.6" rx="5" ry="2.1" transform="rotate(-8 145.5 96.6)" fill="url(#gSh)"/><path d="M136.600 80.500L144.800 97.200A8.400 2.100 0 0 1 128 97.200Z" fill="url(#gYh)" stroke="#b98600" stroke-width=".8" stroke-linejoin="round"/></g>
<g><ellipse cx="177.800" cy="96.100" rx="8.400" ry="2.600" fill="url(#gSh2)"/><ellipse cx="174" cy="88.800" rx="10" ry="7.500" transform="rotate(4 174 88.800)" fill="url(#gTor)" stroke="#b98600" stroke-width=".8" stroke-linejoin="round"/><ellipse cx="173.800" cy="88.600" rx="4.600" ry="1.550" fill="#f3f1e6" stroke="#a87400" stroke-width=".8"/></g>
<g><path d="M216 97.200L220 97L218 98.800L214 99.300Z" fill="#333" opacity=".7"/><path d="M204.100 86L209.500 85.200L217.600 86L212.200 87.600Z" fill="#ffe030" stroke="#b98600" stroke-width=".8" stroke-linejoin="round"/><path d="M205.500 86.300L209.500 85.700L213 86.100L210 86.900Z" fill="#8a7a10" opacity=".55"/><path d="M204.100 86L212.200 87.600V99.800L204.100 98.200Z" fill="url(#gY)" stroke="#b98600" stroke-width=".8" stroke-linejoin="round"/><path d="M212.200 87.600L217.600 86V98L212.200 99.800Z" fill="#ffa600" stroke="#b98600" stroke-width=".8" stroke-linejoin="round"/><path d="M204.500 78.400L208.200 86.600Q204.600 87.600 201.100 86.600Z" fill="url(#gYh)" stroke="#b98600" stroke-width=".8" stroke-linejoin="round"/><path d="M209 83.300H222.200" stroke="#000" stroke-width="1.150"/><circle cx="204.900" cy="94.600" r="3.600" fill="#f0c800"/><g fill="none" stroke="#000" stroke-width=".95"><circle cx="204.900" cy="94.600" r="5"/><path d="M202.500 89.700H207.500"/><circle cx="204.900" cy="94.600" r="3.100"/><path d="M206.300 95.200A1.400 1.400 0 1 1 204.900 93.300"/></g><circle cx="217.100" cy="95.200" r="5.600" fill="none" stroke="#2a2a72" stroke-width="1.150"/></g>
<g><path d="M238.400 82.200L239.300 84L241 84.900L239.300 85.800L238.400 87.600L237.500 85.800L235.800 84.900L237.500 84Z" fill="#000"/><path d="M240.800 82L244.500 80.200" stroke="#d80c0c" stroke-width="2" fill="none"/><path d="M243 77.900L247.200 78.800L244.800 82.600Z" fill="#d80c0c"/><path d="M248.700 79H257.900" stroke="#000" stroke-width="2"/><path d="M254.900 81V84.500" stroke="#d80c0c" stroke-width="2" fill="none"/><path d="M252.400 83.600L254.900 87L257.500 83.600Z" fill="#d80c0c"/><rect x="250.700" y="89" width="6.300" height="6" fill="#fbfbfb" stroke="#111" stroke-width="1.150"/><path d="M257.700 89.500V95.500" stroke="#8a8a8a" stroke-width=".8"/><path d="M257.100 97.500L253.500 98.800" stroke="#d80c0c" stroke-width="2" fill="none"/><path d="M253.800 96.700L250.300 100L255 100.800Z" fill="#d80c0c"/><path d="M244 99.500L248.500 98.600L246 100.200Z" fill="#555" opacity=".7"/><path d="M235.700 91.400L240.800 89.800L247.100 90.600L243.600 92.200Z" fill="#ffe93a" stroke="#b98600" stroke-width=".8" stroke-linejoin="round"/><path d="M235.700 91.400L243.600 92.200V100.600L235.700 99.500Z" fill="url(#gY)" stroke="#b98600" stroke-width=".8" stroke-linejoin="round"/><path d="M243.600 92.200L247.100 90.600V98.700L243.600 100.600Z" fill="#ffa800" stroke="#b98600" stroke-width=".8" stroke-linejoin="round"/></g>
<g><path d="M305 93.500L307.800 94.500V97.500L303 99.500Z" fill="#444" opacity=".8"/><path d="M285.400 92.400L297.600 92.800V100L285.400 99.200Z" fill="url(#gFilF)" stroke="#4848cc" stroke-width=".8" stroke-linejoin="round"/><path d="M297.600 92.800L305 89.600V96.800L297.600 100Z" fill="#7890dc" stroke="#4848cc" stroke-width=".8" stroke-linejoin="round"/><path d="M285.400 92.400L292.800 89.200L305 89.600L297.600 92.800Z" fill="url(#gExT)" stroke="#000c58" stroke-width=".9" stroke-linejoin="round"/><path d="M294.600 79.600L300.800 85.600H297.400V90.600H292.700V85.600H288.600Z" fill="url(#gBd)" stroke="#000c58" stroke-width=".8" stroke-linejoin="round"/></g>
<g><circle cx="332.200" cy="90.200" r="4.600" fill="#fff"/><path d="M331.660 79.810A10.400 10.400 0 0 0 325.510 98.170L329.630 93.260A4 4 0 0 1 331.990 86.200Z" fill="url(#gRev)" stroke="#000c58" stroke-width=".9" stroke-linejoin="round"/><path d="M325.800 98.400A10.400 10.400 0 0 0 339.160 97.930L335.080 93.400A4.300 4.300 0 0 1 329.550 93.590Z" fill="url(#gBl)" stroke="#5058d0" stroke-width=".7" stroke-linejoin="round"/><path d="M340.180 93.920A8.800 8.800 0 0 0 337.250 82.990" fill="none" stroke="#001478" stroke-width="2.900"/><path d="M335.300 80.900L341.900 82.400L336.200 87Z" fill="#001478" stroke="#000c58" stroke-width=".5" stroke-linejoin="round"/><circle cx="332.200" cy="90.200" r="1.250" fill="#00083a"/></g>
<g><path d="M357.800 85L365.100 81.700V94.600L357.800 97.600Z" fill="url(#gBl)" stroke="#2030b0" stroke-width=".8" stroke-linejoin="round"/><path d="M370.600 81.700L378 85V97.600L370.600 94Z" fill="url(#gBd)" stroke="#2030b0" stroke-width=".8" stroke-linejoin="round"/><path d="M367.900 79.200V100" stroke="#ff1010" stroke-width="2" stroke-dasharray="7.400 1.200" stroke-dashoffset="2.500"/></g>
<g transform="translate(0,0)"><path d="M406.900 91.900L414.700 93.800V97.400L404.700 99.400V95.500L406.900 94.900Z" fill="#4c4c4c"/><path d="M399.500 82.200L404.100 80.200L413.900 83.200L408 84.900Z" fill="url(#gFilTop)" stroke="#5058d0" stroke-width=".5" stroke-linejoin="round"/><path d="M393.300 88V85.200C393.500 82.500 396 81.700 400.800 81.600L408 84.900C405 85.600 404.200 87.500 403.900 91Z" fill="url(#gFil)" stroke="#000c60" stroke-width=".7" stroke-linejoin="round"/><path d="M393.300 88L403.900 91V99.700L393.300 96.900Z" fill="url(#gFilF)" stroke="#4444cc" stroke-width=".8" stroke-linejoin="round"/></g>
<g transform="translate(35.9,0)"><path d="M406.900 91.900L414.700 93.800V97.400L404.700 99.400V95.500L406.900 94.900Z" fill="#4c4c4c"/><path d="M397.300 82.400L404 80.200L414.300 83.200L408.100 85.200Z" fill="url(#gFilTop)" stroke="#5058d0" stroke-width=".5" stroke-linejoin="round"/><path d="M393.300 88L397.300 82.400L408.100 85.200L404.200 90.700Z" fill="url(#gCha)" stroke="#000c60" stroke-width=".7" stroke-linejoin="round"/><path d="M393.300 88L403.900 91V99.700L393.300 96.900Z" fill="url(#gFilF)" stroke="#4444cc" stroke-width=".8" stroke-linejoin="round"/></g>
<g><path d="M468.700 84.300L483.200 80.200V93L468.700 97.200Z" fill="url(#gRul)" stroke="#4860c8" stroke-width=".5"/><path d="M468.700 83.300V97.700" stroke="#ff0808" stroke-width="2.300"/><path d="M483.250 79.400V93.800" stroke="#ff0808" stroke-width="2.200"/></g>
<g><path d="M504.500 91L509 80.300L518.600 83.800L508.500 91.800Z" fill="url(#gBd)"/><path d="M508.500 91.800L518.600 83.800V94.500L508.500 97.500Z" fill="url(#gLoF)"/><path d="M508.500 91.800L518.600 83.800" stroke="#6a7ae0" stroke-width=".6"/><path d="M509 80.300L518.600 83.800" fill="none" stroke="#ff1010" stroke-width="1.800" stroke-linecap="round"/><path d="M518.600 83.800V94.500" stroke="#e01828" stroke-width="1.200"/><path d="M504.700 91.200L508.300 92V97.500L504.700 96.500Z" fill="#fff" stroke="#ff2020" stroke-width="1.300" stroke-linejoin="round"/></g>
<g><path d="M546.200 80.200L555.600 82C554.500 88 551 92 545.800 93.800L540.200 91.600C544 89 546 85 546.200 80.200Z" fill="url(#gSw1)" stroke="#3040b0" stroke-width=".5"/><path d="M555.600 82L559.200 89.600C558 96 552 100 545.800 100.800L545.800 93.800C551 92 554.500 88 555.600 82Z" fill="url(#gSw2)" stroke="#3040b0" stroke-width=".5"/><path d="M546.500 97C551 96 554.500 92.500 555.500 88.500" fill="none" stroke="#a02868" stroke-width="1.100" stroke-dasharray="2.500 1.300" opacity=".75"/><path d="M546.200 80.200L555.600 82" stroke="#ff1010" stroke-width="1.500"/><path d="M559.600 78.800L556 83.200L559.200 89.600" fill="none" stroke="#ff1010" stroke-width="1.700" stroke-linejoin="round"/><path d="M540.200 91.600L545.800 93.800V100.800L540.200 98.400Z" fill="#fff" stroke="#ff1010" stroke-width="1.500" stroke-linejoin="round"/><path d="M536 96H542.800" stroke="#ff1010" stroke-width="1.900"/></g>
<g><path d="M573.400 97.200L583.500 95.200L592.800 96.800L582.300 99.300Z" fill="#b4b4b4" stroke="#9a9a9a" stroke-width=".7" stroke-linejoin="round"/><path d="M573.400 90.700L583.500 88.300L592.800 89.900L582.300 92.900Z" fill="#b9b9b9" stroke="#9a9a9a" stroke-width=".7" stroke-linejoin="round"/><path d="M582.400 79.300L588.300 85.400H585.200V90H579.900V85.400H576.900Z" fill="#909090" stroke="#8a8a8a" stroke-width=".6"/></g>
<g><path d="M628.500 93.500H631.200V98L628.500 98.500Z" fill="#b0b0b0"/><path d="M609.300 90.700L616.500 87.800L628.700 88.600L622.500 91.800Z" fill="#b2b2b2" stroke="#9a9a9a" stroke-width=".7" stroke-linejoin="round"/><path d="M609.300 90.700L622.500 91.800V99.800L609.300 98.500Z" fill="url(#gGray2)" stroke="#9a9a9a" stroke-width=".7" stroke-linejoin="round"/><path d="M622.500 91.800L628.700 88.600V96.800L622.500 99.800Z" fill="#a6a6a6" stroke="#9a9a9a" stroke-width=".7" stroke-linejoin="round"/></g>
<g><ellipse cx="676" cy="93" rx="5" ry="2" transform="rotate(-8 676 93)" fill="url(#gSh)"/><ellipse cx="671" cy="98.7" rx="5.5" ry="2.1" transform="rotate(-6 671 98.7)" fill="url(#gSh)"/><circle cx="672.600" cy="85.800" r="7" fill="url(#gBsl)" stroke="#4858d8" stroke-width=".8"/><circle cx="665.900" cy="92.900" r="7.900" fill="url(#gBs)" stroke="#000c58" stroke-width=".8"/></g>
<g><ellipse cx="707" cy="99.300" rx="7" ry="1.600" fill="#000" opacity=".18"/><circle cx="701.900" cy="92.900" r="7.900" fill="url(#gGs)"/><circle cx="708.600" cy="85.800" r="7" fill="#fff" stroke="#9a9a9a" stroke-width=".8"/></g>
<g><ellipse cx="744.500" cy="97.500" rx="7" ry="2" fill="#000" opacity=".16"/><circle cx="744.300" cy="86" r="7.200" fill="url(#gGs2)"/><circle cx="737.800" cy="92.900" r="7.900" fill="url(#gGs2)"/><path d="M735.300 85.400Q738 84.500 738.300 82L748.800 92Q746 92.300 745.300 95Z" fill="#8b8b8b"/></g>
<g><ellipse cx="780" cy="97.800" rx="6" ry="1.500" fill="#000" opacity=".16"/><circle cx="773.700" cy="92.900" r="7.700" fill="#fff"/><circle cx="780.800" cy="85.800" r="7" fill="#fff"/><path d="M774.200 85.200A7.700 7.700 0 0 1 781.400 92.300A7 7 0 0 1 774.200 85.200Z" fill="url(#gGs2)"/><circle cx="773.700" cy="92.900" r="7.700" fill="none" stroke="#8a8a8a" stroke-width=".7"/><circle cx="780.800" cy="85.800" r="7" fill="none" stroke="#8a8a8a" stroke-width=".7"/></g>
<g><path d="M815 96L823.500 96.500V99L813 99.500Z" fill="#aaa" opacity=".7"/><path d="M809.500 85.500L802.500 98.500A8.400 1.600 0 0 0 819.300 98.500L813 85.500Z" fill="url(#gGs)"/><circle cx="811.100" cy="83.700" r="4.500" fill="#e9e9e9" stroke="#c2c2c2" stroke-width="1.200"/><circle cx="811.100" cy="83.700" r="2.700" fill="#d8d8d8"/><path d="M814.600 87L822.900 92.900" stroke="#777" stroke-width="1.200"/></g>
<g><path d="M855 88.500H860V95.500L855 97Z" fill="#b0b0b0"/><path d="M838.700 79.800L852.800 81.500V100L838.700 96.500Z" fill="#d9d9d9" stroke="#b5b5b5" stroke-width=".7"/><path d="M841.300 80.500L849 79L857.500 80.800V96L852.800 98.500V81.500Z" fill="#adadad" stroke="#9a9a9a" stroke-width=".6"/><path d="M841.300 83.300L852 85V97.300L841.300 94.500Z" fill="#9c9c9c" stroke="#8a8a8a" stroke-width=".6"/><path d="M843.800 86.800L850 87.800V94L843.800 92.500Z" fill="#b5b5b5"/><path d="M841.300 83.300L843.800 86.800M852 85L850 87.800M852 97.300L850 94M841.300 94.500L843.800 92.500" stroke="#858585" stroke-width=".6"/><path d="M847.300 87.300V91H850" stroke="#777" stroke-width=".7" fill="none"/></g>
<g><path d="M873.500 96.500L888 92L897 94.500L882.500 99.500Z" fill="#b9b9b9" stroke="#a5a5a5" stroke-width=".5" opacity=".9"/><path d="M873.500 88.500L888 84L897 86.500L882.500 91.500Z" fill="#c2c2c2" stroke="#a5a5a5" stroke-width=".5" opacity=".9"/><path d="M880 81L886 79L892 80.500V98L886 100.800L880 99Z" fill="#8e8e8e"/><path d="M880 81L886 82.500V100.800L880 99Z" fill="#a8a8a8"/><path d="M880 81L886 79L892 80.500L886 82.500Z" fill="#777"/><path d="M878 88.200L888 85.200L895 86.700L884.500 90Z" fill="#cfcfcf" opacity=".75"/><path d="M878 95.500L888 92.500L895 94L884.500 97.300Z" fill="#cfcfcf" opacity=".7"/></g>
<g transform="translate(0,0)"><path d="M939 83.300L945.300 87.600L942.500 93.200L938.800 94.200Z" fill="url(#gTapeSh)"/><path d="M934.600 80.200L938 80.600Q939.200 81 939.200 82.500V95.500Q939 97.400 937.500 97.600L934.600 96.600Z" fill="#c2c2c2" stroke="#8c8c8c" stroke-width=".6"/><ellipse cx="931.400" cy="79.900" rx="5.200" ry="1" fill="#eeeeee" stroke="#9a9a9a" stroke-width=".5"/><rect x="923.300" y="80" width="11.800" height="16.400" rx="2.300" fill="#e0e0e0" stroke="#858585" stroke-width=".9"/><rect x="924.300" y="81" width="9.800" height="14.400" rx="1.600" fill="none" stroke="#fff" stroke-width=".7"/><ellipse cx="929.400" cy="88.400" rx="4.600" ry="5.600" fill="#000"/><path d="M925 86.800A4.600 5.600 0 0 1 934 88.400Z" fill="#f2f210"/><ellipse cx="937.400" cy="89.800" rx="1.200" ry="2.200" fill="#e8e820"/><path d="M936 93.600L944.800 96.300V98.200L936 95.600Z" fill="#dcd440" stroke="#8a8430" stroke-width=".4"/><path d="M938 94.800L943.500 96.500" stroke="#5a5620" stroke-width=".8" stroke-dasharray=".8 .9"/><path d="M944.300 96.500V99.500" stroke="#9c9c9c" stroke-width="1"/></g>
<g transform="translate(36,0)"><path d="M939 83.300L945.300 87.600L942.500 93.200L938.800 94.200Z" fill="url(#gTapeSh)"/><path d="M934.600 80.200L938 80.600Q939.200 81 939.200 82.500V95.500Q939 97.400 937.500 97.600L934.600 96.600Z" fill="#c2c2c2" stroke="#8c8c8c" stroke-width=".6"/><ellipse cx="931.400" cy="79.900" rx="5.200" ry="1" fill="#eeeeee" stroke="#9a9a9a" stroke-width=".5"/><rect x="923.300" y="80" width="11.800" height="16.400" rx="2.300" fill="#e0e0e0" stroke="#858585" stroke-width=".9"/><rect x="924.300" y="81" width="9.800" height="14.400" rx="1.600" fill="none" stroke="#fff" stroke-width=".7"/><ellipse cx="929.400" cy="88.400" rx="4.600" ry="5.600" fill="#000"/><path d="M925 86.800A4.600 5.600 0 0 1 934 88.400Z" fill="#f2f210"/><ellipse cx="937.400" cy="89.800" rx="1.200" ry="2.200" fill="#e8e820"/><path d="M936 93.600L944.800 96.300V98.200L936 95.600Z" fill="#dcd440" stroke="#8a8430" stroke-width=".4"/><path d="M938 94.800L943.500 96.500" stroke="#5a5620" stroke-width=".8" stroke-dasharray=".8 .9"/><path d="M944.300 96.500V99.500" stroke="#9c9c9c" stroke-width="1"/></g><g><path d="M960 80.500L966 99.500L980.500 83" fill="none" stroke="#000" stroke-width="3.400" stroke-linejoin="miter"/><path d="M960 80.500L966 99" stroke="#e41c1c" stroke-width="2.200"/><path d="M966 99.500L980.500 83" stroke="#b04a30" stroke-width="2.200"/><path d="M964 81.800C967 78.500 973 78.500 976 82" fill="none" stroke="#1c60c8" stroke-width="1.500"/><path d="M973.800 82.800L977.500 83.700L977 79.700Z" fill="#1c60c8"/></g>
<g transform="translate(82,0)"><path d="M939 83.300L945.300 87.600L942.500 93.200L938.800 94.200Z" fill="url(#gTapeSh)"/><path d="M934.600 80.200L938 80.600Q939.200 81 939.200 82.500V95.500Q939 97.400 937.500 97.600L934.600 96.600Z" fill="#c2c2c2" stroke="#8c8c8c" stroke-width=".6"/><ellipse cx="931.400" cy="79.900" rx="5.200" ry="1" fill="#eeeeee" stroke="#9a9a9a" stroke-width=".5"/><rect x="923.300" y="80" width="11.800" height="16.400" rx="2.300" fill="#e0e0e0" stroke="#858585" stroke-width=".9"/><rect x="924.300" y="81" width="9.800" height="14.400" rx="1.600" fill="none" stroke="#fff" stroke-width=".7"/><ellipse cx="929.400" cy="88.400" rx="4.600" ry="5.600" fill="#000"/><path d="M925 86.800A4.600 5.600 0 0 1 934 88.400Z" fill="#f2f210"/><ellipse cx="937.400" cy="89.800" rx="1.200" ry="2.200" fill="#e8e820"/><path d="M936 93.600L944.800 96.300V98.200L936 95.600Z" fill="#dcd440" stroke="#8a8430" stroke-width=".4"/><path d="M938 94.800L943.500 96.500" stroke="#5a5620" stroke-width=".8" stroke-dasharray=".8 .9"/><path d="M944.300 96.500V99.500" stroke="#9c9c9c" stroke-width="1"/></g><g><path d="M1008.200 96.800L1023.600 80.600L1027 83.800L1011.800 100.200Z" fill="#ecd878" stroke="#5a4a18" stroke-width=".8" stroke-linejoin="round"/><path d="M1009.800 98.400L1025.300 82.200" stroke="#f8eca8" stroke-width="1"/><path d="M1023.600 80.600L1028 78.400L1027 83.800Z" fill="#d8b088" stroke="#5a4a18" stroke-width=".6" stroke-linejoin="round"/><path d="M1026.200 79.300L1028 78.400L1027.600 80.600Z" fill="#000"/><path d="M1006.500 98.600L1008.200 96.800L1011.800 100.200L1010 102Q1006.800 102.600 1006.500 98.600Z" fill="#c87474" stroke="#6a3030" stroke-width=".7" stroke-linejoin="round"/></g>
<g transform="translate(118,0)"><path d="M939 83.300L945.300 87.600L942.500 93.200L938.800 94.200Z" fill="url(#gTapeSh)"/><path d="M934.600 80.200L938 80.600Q939.200 81 939.200 82.500V95.500Q939 97.400 937.500 97.600L934.600 96.600Z" fill="#c2c2c2" stroke="#8c8c8c" stroke-width=".6"/><ellipse cx="931.400" cy="79.900" rx="5.200" ry="1" fill="#eeeeee" stroke="#9a9a9a" stroke-width=".5"/><rect x="923.300" y="80" width="11.800" height="16.400" rx="2.300" fill="#e0e0e0" stroke="#858585" stroke-width=".9"/><rect x="924.300" y="81" width="9.800" height="14.400" rx="1.600" fill="none" stroke="#fff" stroke-width=".7"/><ellipse cx="929.400" cy="88.400" rx="4.600" ry="5.600" fill="#000"/><path d="M925 86.800A4.600 5.600 0 0 1 934 88.400Z" fill="#f2f210"/><ellipse cx="937.400" cy="89.800" rx="1.200" ry="2.200" fill="#e8e820"/><path d="M936 93.600L944.800 96.300V98.200L936 95.600Z" fill="#dcd440" stroke="#8a8430" stroke-width=".4"/><path d="M938 94.800L943.500 96.500" stroke="#5a5620" stroke-width=".8" stroke-dasharray=".8 .9"/><path d="M944.300 96.500V99.500" stroke="#9c9c9c" stroke-width="1"/></g><path d="M1043.5 98V82.400H1062.8V98" fill="none" stroke="#1e7a1e" stroke-width="2.900"/><path d="M1042.6 91L1050.4 80L1063.2 88.400L1054.8 99.600" fill="none" stroke="#c03038" stroke-width="2.800" opacity=".95"/>
<g transform="translate(154,0)"><path d="M939 83.300L945.300 87.600L942.500 93.200L938.800 94.200Z" fill="url(#gTapeSh)"/><path d="M934.600 80.200L938 80.600Q939.200 81 939.200 82.500V95.500Q939 97.400 937.500 97.600L934.600 96.600Z" fill="#c2c2c2" stroke="#8c8c8c" stroke-width=".6"/><ellipse cx="931.400" cy="79.900" rx="5.200" ry="1" fill="#eeeeee" stroke="#9a9a9a" stroke-width=".5"/><rect x="923.300" y="80" width="11.800" height="16.400" rx="2.300" fill="#e0e0e0" stroke="#858585" stroke-width=".9"/><rect x="924.300" y="81" width="9.800" height="14.400" rx="1.600" fill="none" stroke="#fff" stroke-width=".7"/><ellipse cx="929.400" cy="88.400" rx="4.600" ry="5.600" fill="#000"/><path d="M925 86.800A4.600 5.600 0 0 1 934 88.400Z" fill="#f2f210"/><ellipse cx="937.400" cy="89.800" rx="1.200" ry="2.200" fill="#e8e820"/><path d="M936 93.600L944.800 96.300V98.200L936 95.600Z" fill="#dcd440" stroke="#8a8430" stroke-width=".4"/><path d="M938 94.800L943.500 96.500" stroke="#5a5620" stroke-width=".8" stroke-dasharray=".8 .9"/><path d="M944.300 96.500V99.500" stroke="#9c9c9c" stroke-width="1"/></g><path d="M1078.6 91L1086.4 80L1099.2 88.400L1090.8 99.600" fill="none" stroke="#c03038" stroke-width="2.800" opacity=".95"/>
<g transform="translate(190,0)"><path d="M939 83.300L945.300 87.600L942.500 93.200L938.800 94.200Z" fill="url(#gTapeSh)"/><path d="M934.600 80.200L938 80.600Q939.200 81 939.200 82.500V95.500Q939 97.400 937.500 97.600L934.600 96.600Z" fill="#c2c2c2" stroke="#8c8c8c" stroke-width=".6"/><ellipse cx="931.400" cy="79.900" rx="5.200" ry="1" fill="#eeeeee" stroke="#9a9a9a" stroke-width=".5"/><rect x="923.300" y="80" width="11.800" height="16.400" rx="2.300" fill="#e0e0e0" stroke="#858585" stroke-width=".9"/><rect x="924.300" y="81" width="9.800" height="14.400" rx="1.600" fill="none" stroke="#fff" stroke-width=".7"/><ellipse cx="929.400" cy="88.400" rx="4.600" ry="5.600" fill="#000"/><path d="M925 86.800A4.600 5.600 0 0 1 934 88.400Z" fill="#f2f210"/><ellipse cx="937.400" cy="89.800" rx="1.200" ry="2.200" fill="#e8e820"/><path d="M936 93.600L944.800 96.300V98.200L936 95.600Z" fill="#dcd440" stroke="#8a8430" stroke-width=".4"/><path d="M938 94.800L943.500 96.500" stroke="#5a5620" stroke-width=".8" stroke-dasharray=".8 .9"/><path d="M944.300 96.500V99.500" stroke="#9c9c9c" stroke-width="1"/></g><path d="M1115.5 98V82.400H1134.8V98" fill="none" stroke="#1e7a1e" stroke-width="2.900"/></svg>
<div class="tx" style="left:75.40px;top:7.31px;line-height:20px;height:20px;font-size:14.7px;letter-spacing:0.157px;font-weight:bold;color:#efebe3;text-shadow:0 -1px 0 #2a2926,1px 0 0 #33322e;">FreeCAD</div>
<div class="tx" style="left:1208.50px;top:40.60px;line-height:20px;height:20px;font-size:13px;font-weight:bold;color:#000;transform:scaleX(1.25);transform-origin:0 0;">»</div>
<div class="tx" style="left:483.00px;top:40.51px;line-height:20px;height:20px;font-size:14.7px;letter-spacing:0.421px;color:#3c3b37;">Part</div>
<div class="tx" style="left:4.40px;top:112.71px;line-height:20px;height:20px;font-size:14.7px;letter-spacing:0.144px;color:#3c3b37;">Combo View</div>
<div class="tx" style="left:10.10px;top:139.71px;line-height:20px;height:20px;font-size:14.7px;letter-spacing:0.721px;color:#3c3b37;">Model</div>
<div class="tx" style="left:68.60px;top:140.71px;line-height:20px;height:20px;font-size:14.7px;letter-spacing:-0.337px;color:#3c3b37;">Tasks</div>
<div class="tx" style="left:9.10px;top:170.41px;line-height:20px;height:20px;font-size:14.7px;letter-spacing:0.312px;color:#3c3b37;">Labels &amp; Attributes</div>
<div class="tx" style="left:50.40px;top:192.01px;line-height:20px;height:20px;font-size:14.7px;letter-spacing:0.074px;font-weight:bold;color:#1f1e1c;">F2-T26-ejemplo</div>
<div class="tx" style="left:69.90px;top:211.41px;line-height:20px;height:20px;font-size:14.7px;letter-spacing:0.145px;color:#aaa9a6;">Polygon001</div>
<div class="tx" style="left:69.90px;top:230.41px;line-height:20px;height:20px;font-size:14.7px;letter-spacing:0.190px;color:#aaa9a6;">Polygon002</div>
<div class="tx" style="left:69.90px;top:249.41px;line-height:20px;height:20px;font-size:14.7px;letter-spacing:0.120px;color:#aaa9a6;">Ellipse</div>
<div class="tx" style="left:69.90px;top:268.41px;line-height:20px;height:20px;font-size:14.7px;letter-spacing:-0.027px;color:#aaa9a6;">BSpline002</div>
<div class="tx" style="left:69.90px;top:287.41px;line-height:20px;height:20px;font-size:14.7px;letter-spacing:0.237px;color:#1f1e1c;">Polygon</div>
<div class="tx" style="left:69.90px;top:306.41px;line-height:20px;height:20px;font-size:14.7px;letter-spacing:0.219px;font-weight:bold;color:#1f1e1c;">Extrude</div>
<div class="tx" style="left:11.20px;top:351.81px;line-height:20px;height:20px;font-size:14.7px;letter-spacing:0.483px;color:#3c3b37;">Property</div>
<div class="tx" style="left:110.70px;top:351.81px;line-height:20px;height:20px;font-size:14.7px;letter-spacing:0.429px;color:#3c3b37;">Value</div>
<div class="tx" style="left:12.20px;top:641.11px;line-height:20px;height:20px;font-size:14.7px;letter-spacing:0.807px;color:#3c3b37;">View</div>
<div class="tx" style="left:61.50px;top:642.11px;line-height:20px;height:20px;font-size:14.7px;letter-spacing:0.256px;color:#3c3b37;">Data</div>
<div class="tx" style="left:345.10px;top:643.21px;line-height:20px;height:20px;font-size:14.7px;letter-spacing:-0.083px;color:#3c3b37;">F2-T26-ejemplo : 1*</div>
<div class="tx" style="left:1071.20px;top:675.21px;line-height:20px;height:20px;font-size:14.7px;color:#3c3b37;">117.33 x 68.12 mm</div>
</body></html>
